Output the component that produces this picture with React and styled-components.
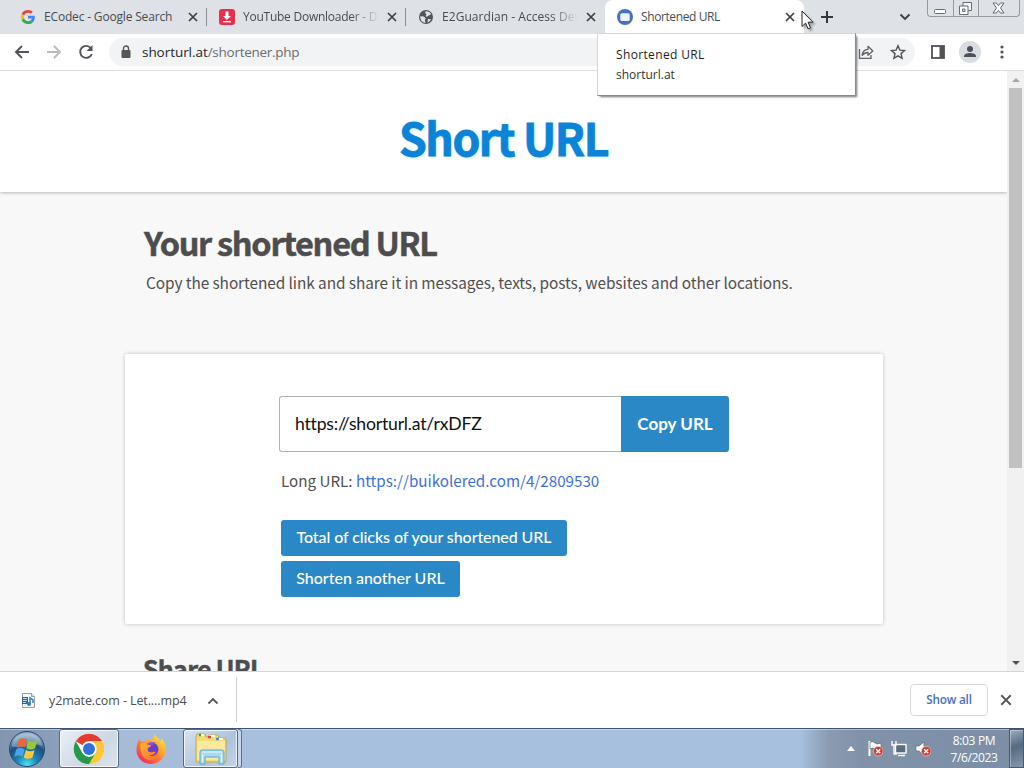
import React from 'react';
import styled, { createGlobalStyle, css } from 'styled-components';

const GlobalStyle = createGlobalStyle`
  * { box-sizing: border-box; }
  body { margin: 0; overflow: hidden; }
  button { border: 0; padding: 0; background: none; font: inherit; color: inherit; }
  svg { display: block; flex: none; }
`;

const segoe = css`font-family: 'Open Sans', 'Noto Sans', sans-serif;`;
const source = css`font-family: 'Noto Sans CJK SC', 'Noto Sans', sans-serif;`;
const lato = css`font-family: Lato, sans-serif;`;

const Screen = styled.div`
  width: 1024px;
  height: 768px;
  display: flex;
  flex-direction: column;
  position: relative;
  overflow: hidden;
  background: #fff;
  ${segoe}
`;

/* ---------- browser chrome ---------- */

const TabStrip = styled.div`
  height: 34px;
  flex: none;
  display: flex;
  padding-left: 8px;
  background: #dee1e6;
`;

const TabBox = styled.div`
  width: 199px;
  height: 34px;
  flex: none;
  display: flex;
  align-items: center;
  padding: 0 5px 0 12px;
  color: #484c50;
  ${(p) => p.$divider && css`
    background: linear-gradient(#8a8d91, #8a8d91) right 8px / 1px 18px no-repeat;
  `}
  ${(p) => p.$active && css`
    background: #fff;
    border-radius: 8px 8px 0 0;
  `}
`;

const TabTitle = styled.span`
  width: 135px;
  margin-left: 8px;
  margin-right: 6px;
  font-size: 12px;
  line-height: 20px;
  letter-spacing: ${(p) => p.$track || 0}px;
  white-space: nowrap;
  overflow: hidden;
  ${(p) => p.$fade && css`
    mask-image: linear-gradient(to right, #000 108px, transparent 136px);
  `}
`;

const StripButton = styled.button`
  width: 28px;
  height: 34px;
  display: grid;
  place-items: center;
  margin-left: ${(p) => p.$ml}px;
`;

const WindowControls = styled.div`
  width: 93px;
  height: 17px;
  display: flex;
  margin-left: 8px;
  border: 1px solid #9699a0;
  border-top: 0;
  border-radius: 0 0 4px 4px;
`;

const WindowButton = styled.button`
  flex: ${(p) => (p.$wide ? '1' : '0 0 25px')};
  display: grid;
  place-items: center;
  padding-right: 1px;
  & + & { border-left: 1px solid #9699a0; }
`;

const Toolbar = styled.div`
  height: 37px;
  flex: none;
  display: flex;
  align-items: center;
  padding-left: 6px;
  border-bottom: 1px solid #dcdcde;
`;

const ToolButton = styled.button`
  width: 32px;
  height: 32px;
  display: grid;
  place-items: center;
`;

const Omnibox = styled.div`
  width: 806px;
  height: 28px;
  display: flex;
  align-items: center;
  margin: 0 7px;
  padding: 0 1px 0 11px;
  border-radius: 14px;
  background: #f1f3f4;
`;

const Address = styled.span`
  flex: 1;
  margin-left: 10px;
  font-size: 13.5px;
  line-height: 20px;
  letter-spacing: -0.27px;
  color: #6a6e72;
  b { font-weight: 400; letter-spacing: -0.05px; color: #25282b; }
`;

const Avatar = styled.span`
  width: 22px;
  height: 22px;
  border-radius: 50%;
  display: grid;
  place-items: center;
  background: #d9dde2;
`;

const HoverCard = styled.div`
  position: absolute;
  left: 597px;
  top: 33px;
  width: 259px;
  height: 63px;
  padding: 11px 18px;
  border: 1px solid #d6d6d6;
  border-right-color: #8b8b8b;
  border-bottom-color: #8b8b8b;
  background: #fff;
  box-shadow: 2px 2px 2px -1px rgba(0, 0, 0, 0.55);
  font-size: 12px;
  line-height: 20px;
  color: #333;
`;

const HoverTitle = styled.div`
  font-weight: 500;
  letter-spacing: 0.35px;
  color: #1e1e1e;
`;

const Pointer = styled.svg`
  position: absolute;
  left: 801px;
  top: 10px;
  filter: drop-shadow(2px 2px 1px rgba(0, 0, 0, 0.3));
`;

/* ---------- web page ---------- */

const Viewport = styled.div`
  height: 600px;
  flex: none;
  display: flex;
  overflow: hidden;
`;

const Page = styled.main`
  flex: 1;
  height: 600px;
  overflow: hidden;
  background: #f8f8f8;
  color: #505050;
  ${source}
`;

const SiteHeader = styled.header`
  height: 121px;
  display: flex;
  justify-content: center;
  padding-top: 31px;
  background: #fff;
  box-shadow: 0 1px 3px rgba(0, 0, 0, 0.26);
`;

const Logo = styled.h1`
  margin: 0;
  font-size: 44.5px;
  line-height: 70px;
  font-weight: 700;
  letter-spacing: -1.4px;
  color: #0b83d6;
  -webkit-text-stroke: 0.8px #0b83d6;
  text-shadow: 1px 1px 3px #b9e6fb;
`;

const Intro = styled.section`
  height: 161px;
  padding: 26px 0 0 144px;
`;

const Heading = styled.h2`
  margin: 0;
  font-size: ${(p) => p.$size}px;
  line-height: 48px;
  font-weight: 700;
  letter-spacing: ${(p) => p.$track}px;
  color: #4d4d4d;
  -webkit-text-stroke: 0.5px #4d4d4d;
`;

const Lead = styled.p`
  margin: 4px 0 0 2px;
  font-size: 15.4px;
  line-height: 24px;
  letter-spacing: -0.08px;
  white-space: nowrap;
`;

const Card = styled.section`
  width: 758px;
  height: 270px;
  margin: 1px 0 0 125px;
  padding: 42px 0 0 154px;
  background: #fff;
  border-radius: 2px;
  box-shadow: 0 0 4px rgba(0, 0, 0, 0.22);
`;

const CopyRow = styled.div`
  display: flex;
  width: 450px;
  height: 56px;
`;

const UrlField = styled.input`
  width: 342px;
  height: 56px;
  padding: 0 16px 2px 15px;
  border: 1px solid #b2b2b2;
  border-right: 0;
  border-radius: 3px 0 0 3px;
  outline: 0;
  background: #fff;
  color: #111;
  font-size: 17.6px;
  letter-spacing: -0.2px;
  ${lato}
`;

const CopyButton = styled.button`
  flex: 1;
  padding-bottom: 2px;
  border-radius: 0 3px 3px 0;
  background: #2a88c6;
  color: #fff;
  font-size: 17px;
  font-weight: 700;
  ${lato}
`;

const LongUrl = styled.p`
  margin: 16px 0 27px 2px;
  font-size: 15.2px;
  line-height: 25px;
  a { color: #3c6fdb; text-decoration: none; }
`;

const Actions = styled.div`
  display: flex;
  flex-direction: column;
  align-items: flex-start;
  gap: 5px;
  margin-left: 2px;
`;

const ActionButton = styled.button`
  height: 36px;
  width: ${(p) => p.$w}px;
  padding-bottom: 3px;
  border-radius: 3px;
  background: #2a88c6;
  color: #fff;
  font-size: 16px;
  letter-spacing: ${(p) => p.$track || 0}px;
  font-weight: 500;
  white-space: nowrap;
  ${lato}
`;

const Share = styled.section`
  padding: 20px 0 0 143px;
`;

const Scrollbar = styled.div`
  width: 17px;
  height: 600px;
  display: flex;
  flex-direction: column;
  align-items: center;
  background: #f1f1f1;
`;

const ScrollArrow = styled.div`
  height: 17px;
  display: grid;
  place-items: center;
`;

const ScrollThumb = styled.div`
  width: 13px;
  height: 380px;
  margin-bottom: auto;
  background: #c1c1c1;
`;

/* ---------- downloads shelf ---------- */

const Shelf = styled.div`
  height: 57px;
  flex: none;
  display: flex;
  align-items: center;
  padding-bottom: 1px;
  border-top: 1px solid #d5d6d8;
  background: #fff;
`;

const DownloadItem = styled.div`
  width: 237px;
  height: 45px;
  display: flex;
  align-items: center;
  padding: 2px 0 0 20px;
  border-right: 1px solid #cfd0d2;
  font-size: 12.5px;
  color: #4a4d51;
`;

const FileName = styled.span`
  width: 141px;
  margin: 0 17px 0 12px;
  white-space: nowrap;
  letter-spacing: -0.1px;
`;

const ShowAll = styled.button`
  width: 78px;
  height: 32px;
  margin: 0 10px 0 auto;
  padding-bottom: 1px;
  border: 1px solid #d6d8dc;
  border-radius: 4px;
  font-size: 11.7px;
  font-weight: 600;
  letter-spacing: -0.15px;
  color: #4470c4;
`;

const ShelfClose = styled.button`
  width: 16px;
  margin-right: 10px;
`;

/* ---------- taskbar ---------- */

const Taskbar = styled.div`
  height: 40px;
  flex: none;
  display: flex;
  align-items: stretch;
  border-top: 1px solid #3d536f;
  box-shadow: inset 0 1px 0 rgba(255, 255, 255, 0.4);
  background: linear-gradient(to right, #8396b0 0, #8b9fba 56px, #a6bbd8 122px, #a7c0dd 250px, #a7c0dd 800px, #8b9cb2 828px, #8192a8 860px, #7c8fa6);
`;

const TaskButton = styled.button`
  width: ${(p) => p.$w}px;
  display: grid;
  place-items: center;
  ${(p) => p.$framed && css`
    border: 1px solid #526983;
    border-radius: 3px;
    box-shadow: inset 0 0 0 1px rgba(255, 255, 255, 0.75);
    background: ${p.$active
    ? 'linear-gradient(135deg, #e9eff6, #ccd8e5 60%, #dce4ed)'
    : 'linear-gradient(135deg, #d6e2f0, #acc3df 60%, #c3d4e8)'};
  `}
`;

const StackEdge = styled.span`
  width: 4px;
  border: 1px solid #5d748f;
  border-left: 0;
  border-radius: 0 3px 3px 0;
  background: #c7d7e9;
`;

const Tray = styled.div`
  display: flex;
  align-items: center;
  gap: 8px;
  margin-left: auto;
`;

const TrayArrow = styled.svg`
  margin-right: 4px;
`;

const Clock = styled.div`
  width: 78px;
  display: flex;
  flex-direction: column;
  align-items: center;
  padding: 3px 0 0 8px;
  font-size: 12px;
  line-height: 17px;
  letter-spacing: -0.35px;
  color: #fff;
  white-space: nowrap;
`;

const ShowDesktop = styled.button`
  width: 15px;
  border: 1px solid #455a72;
  box-shadow: inset 1px 1px 0 rgba(255, 255, 255, 0.35);
  background: linear-gradient(160deg, #9aabbd, #566a80 45%, #8496aa);
`;

const Cross = ({ size = 8, color = '#3c4043', width = 1.7 }) => (
  <svg width="16" height="16" viewBox="-8 -8 16 16">
    <path
      d={`M${-size / 2} ${-size / 2}L${size / 2} ${size / 2}M${size / 2} ${-size / 2}L${-size / 2} ${size / 2}`}
      stroke={color}
      strokeWidth={width}
    />
  </svg>
);

const GoogleIcon = () => (
  <svg width="16" height="16" viewBox="-3 -3 54 54">
    <path fill="#EA4335" d="M24 9.5c3.5 0 6.700 1.200 9.200 3.600l6.900-6.900C35.900 2.400 30.500 0 24 0 14.600 0 6.500 5.400 2.600 13.200l8 6.200C12.400 13.700 17.700 9.500 24 9.500z" />
    <path fill="#4285F4" d="M47 24.500c0-1.600-.2-3.100-.4-4.500H24v9h12.900c-.6 3-2.200 5.500-4.700 7.200l7.700 6C44.400 38 47 31.800 47 24.500z" />
    <path fill="#FBBC05" d="M10.500 28.600c-.5-1.500-.8-3-.8-4.600s.3-3.100.8-4.600l-8-6.200C.9 16.500 0 20.100 0 24s.9 7.500 2.600 10.800l7.900-6.200z" />
    <path fill="#34A853" d="M24 48c6.500 0 11.900-2.100 15.900-5.800l-7.700-6c-2.200 1.500-4.900 2.300-8.200 2.300-6.300 0-11.600-4.200-13.500-9.900l-8 6.200C6.500 42.600 14.600 48 24 48z" />
  </svg>
);

const DownloaderIcon = () => (
  <svg width="16" height="16" viewBox="0 0 16 16">
    <rect width="16" height="16" rx="3" fill="#e92f4c" />
    <path d="M6.500 2.500h3V7H12l-4 4-4-4h2.500z" fill="#fff" />
    <path d="M4 12.700h8" stroke="#fff" strokeWidth="1.300" />
  </svg>
);

const GlobeIcon = () => (
  <svg width="16" height="16" viewBox="0 0 16 16">
    <circle cx="8" cy="8" r="7" fill="#52565c" />
    <path d="M7.500 2.500C9 2 12 2.800 13.200 5c-1 .2-1.200 1.500-2.400 1.500-1 0-.8 1.200-2 1.200S7.500 6.500 8.500 5.600C7.500 5 7 3.800 7.500 2.500zM2.200 7.200l3.600.3 2 2-1 1.500.7 2.800C4.500 13.700 2 11 2.200 7.200zM10 10l3 .2c-.8 1.700-2 2.700-3.600 3.200z" fill="#dee1e6" />
  </svg>
);

const LinkSiteIcon = () => (
  <svg width="16" height="16" viewBox="0 0 16 16">
    <circle cx="8" cy="8" r="8" fill="#4571c4" />
    <rect x="3.300" y="4.300" width="9.400" height="7.700" rx="1.500" fill="#edf3fd" />
  </svg>
);

const ChromeIcon = () => (
  <svg width="32" height="32" viewBox="0 0 48 48">
    <circle cx="24" cy="24" r="23" fill="#fff" />
    <path d="M24 24L4.100 12.500A23 23 0 0 1 43.900 12.500H24z" fill="#e33b2e" />
    <path d="M43.900 12.500A23 23 0 0 1 24 47l10-17.200L24 12.500z" fill="#fcc934" />
    <path d="M24 47A23 23 0 0 1 4.100 12.500L14 29.800 24 35.500 34 29.800z" fill="#279847" />
    <circle cx="24" cy="24" r="11.500" fill="#fff" />
    <circle cx="24" cy="24" r="9" fill="#2f72df" />
  </svg>
);

const FirefoxIcon = () => (
  <svg width="32" height="32" viewBox="0 0 32 32">
    <defs>
      <linearGradient id="fox" x1="0.85" y1="0.1" x2="0.2" y2="0.9">
        <stop offset="0" stopColor="#ffe33d" />
        <stop offset="0.5" stopColor="#ff8f2b" />
        <stop offset="1" stopColor="#f0325f" />
      </linearGradient>
      <linearGradient id="foxFace" x1="0" y1="0" x2="1" y2="1">
        <stop offset="0" stopColor="#ffb52c" />
        <stop offset="1" stopColor="#ff6a33" />
      </linearGradient>
    </defs>
    <path d="M4.500 5C4.700 7 5.200 8 6 9c1.500-1 3-1.200 4.500-1C13 6.500 16 6 18.500 6.500c-.2-2 .2-4 1.500-5.500 1.200 3 3.500 4 5.500 7 .7-.8.8-1.500.8-2.500C30 9 31 13 30.500 18 29.700 25.500 23.500 31 16 31 8 31 1.500 25 1.500 17c0-4.500 1-8 3-12z" fill="url(#fox)" />
    <circle cx="16.500" cy="16.500" r="7" fill="#6a3fc4" />
    <path d="M12 10.500c2-1.500 6-2.500 9-.5-2 0-3 .8-3.500 2z" fill="#9650db" />
    <path d="M5.500 11c2.500-1.500 5-1.500 7 .5l3.800.8c-.3 1.700-2.800 1.900-3.600 3.500-.4 3 2.300 4.200 5 3.200 1.500-.5 2.600-.3 3 .3-1.200 2.200-4.200 3.500-7.200 2.700 4 2.500 9 0 9.700-4.500 1.500 6-4 10.500-9.700 9.500C8 26 4.500 19 5.500 11z" fill="url(#foxFace)" />
  </svg>
);

const ExplorerIcon = () => (
  <svg width="34" height="34" viewBox="0 0 34 34">
    <path d="M2 5l1-3h8l1 3h3l1-2h8l1 3h6l1 3v21H2z" fill="#f2dc79" stroke="#c7a947" />
    <path d="M3 9h28v19H3z" fill="#f9e99c" />
    <path d="M5 3h5M15 4h6M24 7h5" stroke="#fff8d6" strokeWidth="2" />
    <path d="M5 3h2" stroke="#2e9f4e" strokeWidth="2.500" />
    <path d="M14 5h3" stroke="#d9432f" strokeWidth="2.500" />
    <path d="M22 7h3" stroke="#3b96cf" strokeWidth="2.500" />
    <path d="M6 32V20q0-2 2-2h20q2 0 2 2v12h-5v-7H11v7z" fill="#a8daf0" stroke="#5aa9d0" />
    <path d="M8 20h20M8.500 22v8M27.500 22v8" stroke="#e3f7ff" />
  </svg>
);

const StartOrb = () => (
  <svg width="38" height="38" viewBox="0 0 38 38">
    <defs>
      <radialGradient id="orb" cx="0.5" cy="0.95" r="0.85">
        <stop offset="0" stopColor="#4ce3f5" />
        <stop offset="0.35" stopColor="#1b86b9" />
        <stop offset="0.7" stopColor="#1d4f80" />
        <stop offset="1" stopColor="#7fa5c3" />
      </radialGradient>
    </defs>
    <circle cx="19" cy="19" r="17.500" fill="url(#orb)" stroke="#2c4c6c" />
    <path d="M4 16C5 7 12 3 19 3s14 4 15 13c-9-5-20 5-30 0z" fill="#fff" opacity="0.3" />
    <path d="M11 9.500q4-2.500 8 0l-2 8q-4.500-2.500-8.300 0z" fill="#ee6633" />
    <path d="M20.300 10.300q4.500 2.500 9 0l-2.200 8q-4.500 2.500-8.800 0z" fill="#96c83c" />
    <path d="M8.300 19.200q4-2.500 8.300 0l-2 7.600q-4.200-2.400-8.300 0z" fill="#4aa5e6" />
    <path d="M17.800 20q4.500 2.500 8.800 0l-2.100 7.600q-4.400 2.500-8.700 0z" fill="#fcc83c" />
  </svg>
);

const MediaFileIcon = () => (
  <svg width="17" height="17" viewBox="0 0 17 17">
    <path d="M2.500 1.500h9l3 3v11h-12z" fill="#f5f9fd" stroke="#92a0ae" />
    <path d="M11.500 1.500v3h3" fill="#dde6ee" stroke="#92a0ae" />
    <path d="M2 5h6v7H2z" fill="#3b5d80" />
    <path d="M3 6.500h4M3 8.500h4M3 10.500h3" stroke="#c3ddf0" />
    <path d="M10 12V6l3 2v3" stroke="#2a7fc4" strokeWidth="1.500" fill="none" />
    <circle cx="9" cy="12" r="2" fill="#2a7fc4" />
  </svg>
);

const RedBadge = () => (
  <>
    <circle cx="11.200" cy="11.200" r="4.800" fill="#d23a35" stroke="#f2c4c0" strokeWidth="0.700" />
    <path d="M9.200 9.200l4 4m0-4l-4 4" stroke="#fff" strokeWidth="1.500" />
  </>
);

const tabs = [
  { title: 'ECodec - Google Search', icon: GoogleIcon, divider: true, track: -0.17 },
  { title: 'YouTube Downloader - Dow', icon: DownloaderIcon, divider: true, fade: true, track: -0.25 },
  { title: 'E2Guardian - Access Denied', icon: GlobeIcon, fade: true, track: 0.05 },
  { title: 'Shortened URL', icon: LinkSiteIcon, active: true, track: -0.4 },
];

const App = () => (
  <Screen>
    <GlobalStyle />
    <TabStrip>
      {tabs.map(({ title, icon: Icon, divider, fade, active, track }) => (
        <TabBox key={title} $divider={divider} $active={active}>
          <Icon />
          <TabTitle $fade={fade} $track={track}>{title}</TabTitle>
          <Cross />
        </TabBox>
      ))}
      <StripButton $ml={9}>
        <svg width="14" height="14"><path d="M7 1v12M1 7h12" stroke="#35383b" strokeWidth="2" /></svg>
      </StripButton>
      <StripButton $ml={50}>
        <svg width="12" height="8"><path d="M1.500 1.500L6 6l4.500-4.500" fill="none" stroke="#3c4043" strokeWidth="1.900" /></svg>
      </StripButton>
      <WindowControls>
        <WindowButton>
          <svg width="13" height="14"><rect x="0.500" y="8.500" width="11" height="4" rx="1" fill="#fff" stroke="#666b74" /></svg>
        </WindowButton>
        <WindowButton>
          <svg width="13" height="13">
            <path d="M4 .5h8.500v8H4z" fill="#f4f5f7" stroke="#666b74" />
            <path d="M.5 4h8.500v8.500H.5z" fill="#fff" stroke="#666b74" />
            <path d="M3.500 7h2.500v2.500H3.500z" fill="#dee1e6" stroke="#666b74" />
          </svg>
        </WindowButton>
        <WindowButton $wide>
          <svg width="13" height="12"><path d="M1 1h3.500L6.500 3.500 8.500 1H12L8.500 6 12 11H8.500L6.500 8.500 4.500 11H1l3.500-5z" fill="#fff" stroke="#666b74" /></svg>
        </WindowButton>
      </WindowControls>
    </TabStrip>

    <Toolbar>
      <ToolButton>
        <svg width="16" height="16"><path d="M15 8H2m6-6L2 8l6 6" fill="none" stroke="#505357" strokeWidth="1.900" /></svg>
      </ToolButton>
      <ToolButton>
        <svg width="16" height="16"><path d="M1 8h13M8 2l6 6-6 6" fill="none" stroke="#b9bbbe" strokeWidth="1.900" /></svg>
      </ToolButton>
      <ToolButton>
        <svg width="16" height="16">
          <path d="M12.800 4A6 6 0 1 0 13.800 10" fill="none" stroke="#505357" strokeWidth="1.900" />
          <path d="M14.500 1v6h-6z" fill="#505357" />
        </svg>
      </ToolButton>
      <Omnibox>
        <svg width="12" height="14">
          <rect x="1.500" y="5" width="9" height="8" rx="1" fill="#53575b" />
          <path d="M3.500 6V3.500a2.500 2.500 0 0 1 5 0V6" fill="none" stroke="#53575b" strokeWidth="1.400" />
        </svg>
        <Address><b>shorturl.at</b>/shortener.php</Address>
        <ToolButton>
          <svg width="16" height="16" fill="none" stroke="#606468" strokeWidth="1.300">
            <path d="M1.500 5v9.300h11.500V11" />
            <path d="M4.200 11.300C4.500 7.500 7 5.500 10 5.300V2.300L14.800 7 10 11.300V8.500C7.500 8.500 5.700 9.400 4.200 11.300z" strokeLinejoin="round" />
          </svg>
        </ToolButton>
        <ToolButton>
          <svg width="16" height="16"><path d="M8 1.700l1.900 4.400 4.700.4-3.600 3.100 1.100 4.700L8 11.800l-4.100 2.500L5 9.600 1.400 6.500l4.700-.4z" fill="none" stroke="#505357" strokeWidth="1.400" /></svg>
        </ToolButton>
      </Omnibox>
      <ToolButton>
        <svg width="16" height="14"><rect x="2" y="1" width="12" height="12" fill="none" stroke="#505357" strokeWidth="1.800" /><path d="M9.500 1H14v12H9.500z" fill="#505357" /></svg>
      </ToolButton>
      <ToolButton>
        <Avatar>
          <svg width="14" height="14"><circle cx="7" cy="4" r="3" fill="#4b5158" /><path d="M1 12V10.500Q2 8 7 8t6 2.500V12z" fill="#4b5158" /></svg>
        </Avatar>
      </ToolButton>
      <ToolButton>
        <svg width="4" height="16" fill="#505357"><circle cx="2" cy="3" r="1.600" /><circle cx="2" cy="8" r="1.600" /><circle cx="2" cy="13" r="1.600" /></svg>
      </ToolButton>
    </Toolbar>

    <Viewport>
      <Page>
        <SiteHeader><Logo>Short URL</Logo></SiteHeader>
        <Intro>
          <Heading $size={32.500} $track={-1.300}>Your shortened URL</Heading>
          <Lead>Copy the shortened link and share it in messages, texts, posts, websites and other locations.</Lead>
        </Intro>
        <Card>
          <CopyRow>
            <UrlField readOnly value="https://shorturl.at/rxDFZ" />
            <CopyButton>Copy URL</CopyButton>
          </CopyRow>
          <LongUrl>Long URL: <a>https://buikolered.com/4/2809530</a></LongUrl>
          <Actions>
            <ActionButton $w={286} $track={-0.080}>Total of clicks of your shortened URL</ActionButton>
            <ActionButton $w={179}>Shorten another URL</ActionButton>
          </Actions>
        </Card>
        <Share><Heading $size={25} $track={-0.750}>Share URL</Heading></Share>
      </Page>
      <Scrollbar>
        <ScrollArrow><svg width="8" height="4"><path d="M0 4l4-4 4 4z" fill="#a3a3a3" /></svg></ScrollArrow>
        <ScrollThumb />
        <ScrollArrow><svg width="8" height="4"><path d="M0 0h8L4 4z" fill="#505050" /></svg></ScrollArrow>
      </Scrollbar>
    </Viewport>

    <Shelf>
      <DownloadItem>
        <MediaFileIcon />
        <FileName>y2mate.com - Let....mp4</FileName>
        <svg width="12" height="8"><path d="M1.500 6.500L6 2l4.500 4.500" fill="none" stroke="#55585c" strokeWidth="1.800" /></svg>
      </DownloadItem>
      <ShowAll>Show all</ShowAll>
      <ShelfClose><Cross size={9.500} color="#55585c" width={1.900} /></ShelfClose>
    </Shelf>

    <Taskbar>
      <TaskButton $w={54}><StartOrb /></TaskButton>
      <TaskButton $w={5} />
      <TaskButton $w={60} $framed $active><ChromeIcon /></TaskButton>
      <TaskButton $w={64}><FirefoxIcon /></TaskButton>
      <TaskButton $w={55} $framed><ExplorerIcon /></TaskButton>
      <StackEdge />
      <Tray>
        <TrayArrow width="8" height="5"><path d="M0 5l4-5 4 5z" fill="#fff" /></TrayArrow>
        <svg width="16" height="17">
          <path d="M2.500 1v15" stroke="#fff" strokeWidth="2" />
          <path d="M3 2q3-1 5 1t6 0v6q-3 2-5.500 0T3 9z" fill="#fff" stroke="#4b5a6b" strokeWidth="0.600" />
          <RedBadge />
        </svg>
        <svg width="16" height="17">
          <rect x="4.500" y="4.500" width="10.500" height="8.500" fill="#5c6b7c" stroke="#fff" strokeWidth="1.400" />
          <path d="M7 15.500h7M1 1v4h4V1M3 5v9h3" fill="none" stroke="#fff" strokeWidth="1.300" />
        </svg>
        <svg width="16" height="17">
          <path d="M1 6h3l5-4v13l-5-4H1z" fill="#fff" stroke="#4b5a6b" strokeWidth="0.600" />
          <RedBadge />
        </svg>
      </Tray>
      <Clock><span>8:03 PM</span><span>7/6/2023</span></Clock>
      <ShowDesktop />
    </Taskbar>

    <HoverCard>
      <HoverTitle>Shortened URL</HoverTitle>
      <div>shorturl.at</div>
    </HoverCard>
    <Pointer width="14" height="21" viewBox="0 0 14 21">
      <path d="M1 1v15.500l3.600-3.400 2.400 5.700 2.500-1-2.400-5.600H12z" fill="#fff" stroke="#222" />
    </Pointer>
  </Screen>
);

export default App;
